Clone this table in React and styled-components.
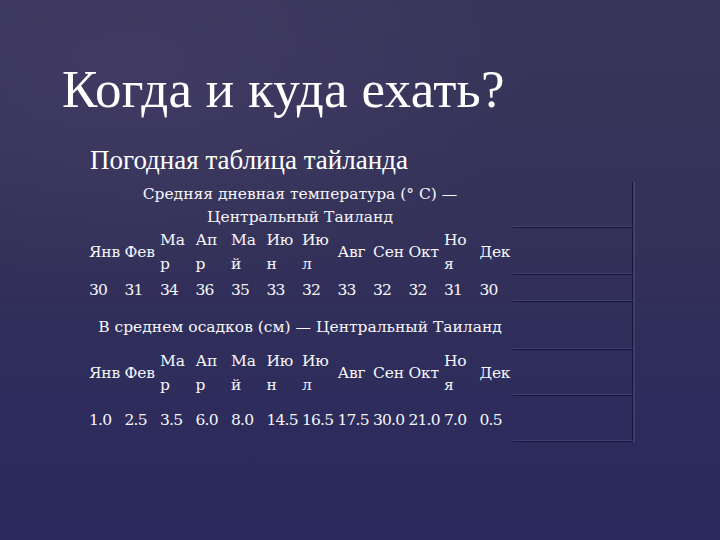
import React from "react";
import styled, { createGlobalStyle } from "styled-components";

const Global = createGlobalStyle`
  html, body { margin: 0; padding: 0; }
  body { background: #2c2b5c; }
`;

const Slide = styled.div`
  width: 720px;
  height: 540px;
  box-sizing: border-box;
  padding-top: 63px;
  overflow: hidden;
  color: #ffffff;
  background:
    radial-gradient(ellipse 80% 60% at 18% 12%, rgba(72, 64, 106, 0.55) 0%, rgba(72, 64, 106, 0) 70%),
    linear-gradient(180deg, #39355a 0%, #343259 40%, #2d2c5c 75%, #2a2a5e 100%);
  display: flex;
  flex-direction: column;
`;

const Title = styled.h1`
  margin: 0 0 0 62px;
  font-family: "Liberation Serif", "Times New Roman", serif;
  font-weight: normal;
  font-size: 53px;
  line-height: 53px;
  letter-spacing: 0.3px;
  white-space: nowrap;
`;

const Subtitle = styled.h2`
  margin: 31px 0 0 90px;
  font-family: "Liberation Serif", "Times New Roman", serif;
  font-weight: normal;
  font-size: 27px;
  line-height: 27px;
  white-space: nowrap;
`;

const Table = styled.div`
  margin: 8px 0 0 87px;
  width: 546px;
  display: grid;
  grid-template-columns: repeat(12, 35.5px) 120px;
  grid-template-rows: 46px 47px 27px 48px 46px 46px;
  border-right: 1.5px solid #16163a;
  box-shadow: 2px 0 0 rgba(120, 120, 175, 0.22);
  box-sizing: border-box;
  font-family: "DejaVu Serif", "Liberation Serif", serif;
  font-size: 15.5px;
  color: #f6f6fa;
`;

const Caption = styled.div`
  grid-column: 1 / span 12;
  display: flex;
  flex-direction: column;
  justify-content: center;
  align-items: center;
  text-align: center;
  line-height: 23px;
  padding-top: ${(p) => p.$shift || 0}px;
  white-space: nowrap;
`;

const Month = styled.div`
  display: flex;
  flex-direction: column;
  justify-content: center;
  padding-left: 2px;
  line-height: 24px;
  white-space: nowrap;
  letter-spacing: -0.2px;
`;

const Value = styled.div`
  display: flex;
  align-items: center;
  padding-left: 2px;
  padding-top: 2px;
  font-size: 15.5px;
  white-space: nowrap;
  letter-spacing: -0.8px;
`;

const Filler = styled.div`
  border-bottom: 1.5px solid #16163a;
  box-shadow: inset 0 -1px 0 rgba(120, 120, 175, 0.25);
`;

const months = [
  ["Янв"],
  ["Фев"],
  ["Ма", "р"],
  ["Ап", "р"],
  ["Ма", "й"],
  ["Ию", "н"],
  ["Ию", "л"],
  ["Авг"],
  ["Сен"],
  ["Окт"],
  ["Но", "я"],
  ["Дек"],
];

const temps = ["30", "31", "34", "36", "35", "33", "32", "33", "32", "32", "31", "30"];
const rain = ["1.0", "2.5", "3.5", "6.0", "8.0", "14.5", "16.5", "17.5", "30.0", "21.0", "7.0", "0.5"];

const MonthRow = () => (
  <>
    {months.map((m, i) => (
      <Month key={i}>
        {m.map((part, j) => (
          <span key={j}>{part}</span>
        ))}
      </Month>
    ))}
    <Filler />
  </>
);

const ValueRow = ({ values }) => (
  <>
    {values.map((v, i) => (
      <Value key={i}>{v}</Value>
    ))}
    <Filler />
  </>
);

export default function App() {
  return (
    <>
      <Global />
      <Slide>
        <Title>Когда и куда ехать?</Title>
        <Subtitle>Погодная таблица тайланда</Subtitle>
        <Table>
          <Caption $shift={2}>
            <span>Средняя дневная температура (° C) —</span>
            <span>Центральный Таиланд</span>
          </Caption>
          <Filler />
          <MonthRow />
          <ValueRow values={temps} />
          <Caption $shift={3}>
            <span>В среднем осадков (см) — Центральный Таиланд</span>
          </Caption>
          <Filler />
          <MonthRow />
          <ValueRow values={rain} />
        </Table>
      </Slide>
    </>
  );
}
